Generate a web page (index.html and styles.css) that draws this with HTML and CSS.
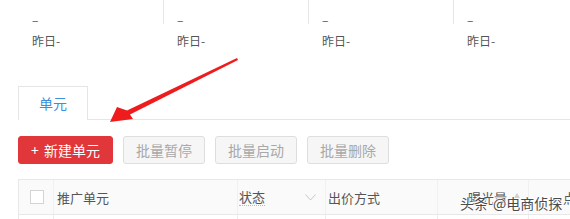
FILE: index.html
```html
<!DOCTYPE html>
<html lang="zh-CN">
<head>
<meta charset="utf-8">
<title>单元</title>
<link rel="stylesheet" href="styles.css">
</head>
<body>
<div class="page">
  <div class="stats">
    <div class="stat first">
      <div class="stat-val">–</div>
      <div class="stat-sub">昨日-</div>
    </div>
    <div class="stat">
      <div class="stat-val">–</div>
      <div class="stat-sub">昨日-</div>
    </div>
    <div class="stat">
      <div class="stat-val">–</div>
      <div class="stat-sub">昨日-</div>
    </div>
    <div class="stat">
      <div class="stat-val">–</div>
      <div class="stat-sub">昨日-</div>
    </div>
  </div>

  <div class="tabs">
    <div class="tab">单元</div>
  </div>

  <div class="toolbar">
    <button class="btn btn-primary"><span class="plus">+</span>新建单元</button>
    <button class="btn btn-gray">批量暂停</button>
    <button class="btn btn-gray">批量启动</button>
    <button class="btn btn-gray">批量删除</button>
  </div>

  <div class="table">
    <div class="row head">
      <div class="cell c-check"><span class="checkbox"></span></div>
      <div class="cell c-name">推广单元</div>
      <div class="cell c-status"><span class="dotted">状态</span>
        <svg class="chev" width="11" height="7" viewBox="0 0 11 7"><polyline points="0.5,0.5 5.5,6 10.5,0.5" fill="none" stroke="#c9c9c9" stroke-width="1"/></svg>
      </div>
      <div class="cell c-bid">出价方式</div>
      <div class="cell c-exp">曝光量<span class="sort"></span></div>
      <div class="cell c-click">点击量</div>
    </div>
    <div class="row body">
      <div class="cell c-check"></div>
      <div class="cell c-name"></div>
      <div class="cell c-status"></div>
      <div class="cell c-bid"></div>
      <div class="cell c-exp"></div>
      <div class="cell c-click"></div>
    </div>
  </div>
</div>

<svg class="arrow" width="570" height="219" viewBox="0 0 570 219">
  <polygon points="110,122 117,107 127,110.5 237,58 238,60 130,114.5 133,119" fill="#ee1c1c"/>
</svg>

<div class="watermark">头条<span class="wm-at">@电商侦探</span></div>
</body>
</html>
```

FILE: styles.css
```css
html, body {
  margin: 0;
  padding: 0;
  background: #ffffff;
  overflow: hidden;
}
body {
  width: 570px;
  height: 219px;
  position: relative;
  font-family: "Noto Sans CJK SC", "Noto Sans", "Liberation Sans", sans-serif;
  color: #555555;
}
.page {
  padding-left: 18px;
}

/* stats */
.stats {
  display: flex;
}
.stat {
  width: 145px;
  flex: none;
}
.stat-val {
  height: 24px;
  box-sizing: border-box;
  border-left: 1px solid #e6e6e6;
  padding: 13px 0 0 13px;
  font-size: 12px;
  line-height: 14px;
  color: #555555;
}
.stat.first .stat-val {
  border-left-color: transparent;
}
.stat-sub {
  margin-top: 10px;
  padding-left: 14px;
  font-size: 12px;
  line-height: 14px;
  color: #555555;
}

/* tabs */
.tabs {
  margin-top: 38px;
  display: flex;
  border-bottom: 1px solid #e5e5e5;
  height: 33px;
}
.tab {
  width: 70px;
  height: 34px;
  box-sizing: border-box;
  border: 1px solid #e5e5e5;
  border-bottom: none;
  background: #ffffff;
  color: #3d8fdc;
  font-size: 14px;
  line-height: 32px;
  text-align: center;
}

/* toolbar */
.toolbar {
  margin-top: 16px;
  display: flex;
  gap: 10px;
}
.btn {
  height: 28px;
  box-sizing: border-box;
  border-radius: 3px;
  font-family: inherit;
  font-size: 14px;
  line-height: 26px;
  padding: 0;
  margin: 0;
}
.btn-primary {
  width: 95px;
  background: #e2373a;
  border: 1px solid #e2373a;
  color: #ffffff;
}
.plus {
  margin-right: 5px;
}
.btn-gray {
  width: 82px;
  background: #f6f6f6;
  border: 1px solid #dedede;
  color: #a8a8a8;
}

/* table */
.table {
  margin-top: 15px;
  width: 720px;
  border-top: 1px solid #e8e8e8;
  border-left: 1px solid #e8e8e8;
}
.row {
  display: grid;
  grid-template-columns: 35px 184px 88px 112px 91px 120px;
}
.row.head {
  height: 34px;
  background: #fafafa;
  border-bottom: 1px solid #e8e8e8;
}
.row.body {
  height: 30px;
}
.cell {
  border-right: 1px solid #ececec;
  display: flex;
  align-items: center;
  font-size: 13px;
  color: #555555;
  box-sizing: border-box;
}
.row.head .cell {
  border-right-color: #f0f0f0;
}
.c-check {
  justify-content: center;
}
.checkbox {
  width: 14px;
  height: 14px;
  box-sizing: border-box;
  border: 1px solid #d4d4d4;
  background: #ffffff;
  margin-left: 2px;
}
.c-name {
  padding-left: 3px;
}
.c-status {
  padding-left: 1px;
  padding-right: 9px;
  justify-content: space-between;
}
.dotted {
  border-bottom: 1px dotted #bbbbbb;
  line-height: 16px;
}
.chev {
  display: block;
}
.c-bid {
  padding-left: 2px;
}
.c-exp {
  justify-content: flex-end;
  padding-right: 8px;
}
.sort {
  width: 0;
  height: 0;
  border-left: 3.5px solid transparent;
  border-right: 3.5px solid transparent;
  border-bottom: 5px solid #d0d0d0;
  margin-left: 7px;
  margin-top: -4px;
}
.c-click {
  padding-left: 34px;
}

/* overlays */
.arrow {
  position: absolute;
  left: 0;
  top: 0;
  pointer-events: none;
}
.watermark {
  position: absolute;
  left: 460px;
  top: 194px;
  font-size: 14px;
  line-height: 18px;
  color: #4a4a4a;
  white-space: nowrap;
  text-shadow: 0 0 2px #ffffff, 0 0 2px #ffffff, 1px 1px 0 #ffffff, -1px -1px 0 #ffffff;
}
.wm-at {
  margin-left: 5px;
}
```
